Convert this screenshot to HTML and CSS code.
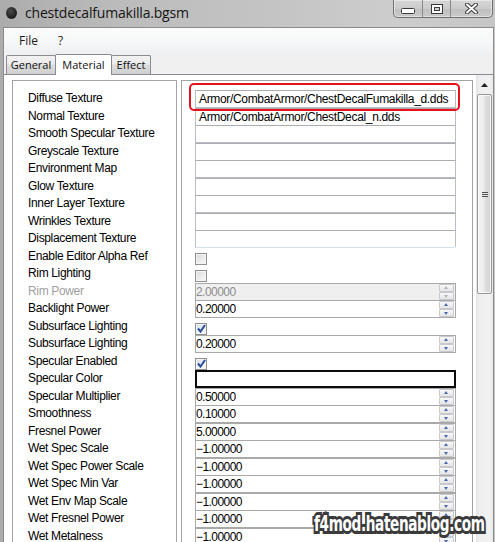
FILE: index.html
```html
<!DOCTYPE html>
<html>
<head>
<meta charset="utf-8">
<title>chestdecalfumakilla.bgsm</title>
<link rel="stylesheet" href="styles.css">
</head>
<body>
<div class="window">
  <div class="titlebar">
    <span class="app-icon"></span>
    <span class="title">chestdecalfumakilla.bgsm</span>
    <div class="caption-buttons">
      <div class="cbtn cbtn-min">
        <svg width="14" height="6" viewBox="0 0 14 6"><rect x="0.5" y="0.5" width="13" height="5" rx="1" fill="#fff" stroke="#3a3a3a"/></svg>
      </div>
      <div class="cbtn cbtn-max">
        <svg width="12" height="10" viewBox="0 0 12 10"><rect x="0.5" y="0.5" width="11" height="9" fill="#fff" stroke="#3a3a3a"/><rect x="3.5" y="3.5" width="5" height="3" fill="#cfcfcf" stroke="#3a3a3a"/></svg>
      </div>
      <div class="cbtn cbtn-close">
        <svg width="13" height="11" viewBox="0 0 13 11"><path d="M2 1.5 L11 9.5 M11 1.5 L2 9.5" stroke="#3a3a3a" stroke-width="4" stroke-linecap="round"/><path d="M2 1.5 L11 9.5 M11 1.5 L2 9.5" stroke="#fff" stroke-width="2" stroke-linecap="round"/></svg>
      </div>
    </div>
  </div>

  <div class="client">
    <div class="menubar">
      <span class="menu-item">File</span>
      <span class="menu-item">?</span>
    </div>

    <div class="tabstrip">
      <div class="tab tab-general">General</div>
      <div class="tab tab-material active">Material</div>
      <div class="tab tab-effect">Effect</div>
    </div>

    <div class="tabpage">
      <div class="panes">
        <div class="labels">
          <div class="lbl">Diffuse Texture</div>
          <div class="lbl">Normal Texture</div>
          <div class="lbl">Smooth Specular Texture</div>
          <div class="lbl">Greyscale Texture</div>
          <div class="lbl">Environment Map</div>
          <div class="lbl">Glow Texture</div>
          <div class="lbl">Inner Layer Texture</div>
          <div class="lbl">Wrinkles Texture</div>
          <div class="lbl">Displacement Texture</div>
          <div class="lbl">Enable Editor Alpha Ref</div>
          <div class="lbl">Rim Lighting</div>
          <div class="lbl dim">Rim Power</div>
          <div class="lbl">Backlight Power</div>
          <div class="lbl">Subsurface Lighting</div>
          <div class="lbl">Subsurface Lighting</div>
          <div class="lbl">Specular Enabled</div>
          <div class="lbl">Specular Color</div>
          <div class="lbl">Specular Multiplier</div>
          <div class="lbl">Smoothness</div>
          <div class="lbl">Fresnel Power</div>
          <div class="lbl">Wet Spec Scale</div>
          <div class="lbl">Wet Spec Power Scale</div>
          <div class="lbl">Wet Spec Min Var</div>
          <div class="lbl">Wet Env Map Scale</div>
          <div class="lbl">Wet Fresnel Power</div>
          <div class="lbl">Wet Metalness</div>
        </div>

        <div class="fields">
          <div class="callout"></div>
          <div class="frow"><div class="tex">Armor/CombatArmor/ChestDecalFumakilla_d.dds</div></div>
          <div class="frow"><div class="tex">Armor/CombatArmor/ChestDecal_n.dds</div></div>
          <div class="frow"><div class="tex"></div></div>
          <div class="frow"><div class="tex"></div></div>
          <div class="frow"><div class="tex"></div></div>
          <div class="frow"><div class="tex"></div></div>
          <div class="frow"><div class="tex"></div></div>
          <div class="frow"><div class="tex"></div></div>
          <div class="frow"><div class="tex tex-last"></div></div>
          <div class="frow"><span class="chk"></span></div>
          <div class="frow"><span class="chk"></span></div>
          <div class="frow"><div class="num off"><span class="val">2.00000</span><span class="spin"><i class="up"></i><i class="dn"></i></span></div></div>
          <div class="frow"><div class="num"><span class="val">0.20000</span><span class="spin"><i class="up"></i><i class="dn"></i></span></div></div>
          <div class="frow"><span class="chk on"><svg width="9" height="9" viewBox="0 0 9 9"><path d="M1 4.5 L3.5 7.5 L8 1" fill="none" stroke="#2c4d9e" stroke-width="2"/></svg></span></div>
          <div class="frow"><div class="num"><span class="val">0.20000</span><span class="spin"><i class="up"></i><i class="dn"></i></span></div></div>
          <div class="frow"><span class="chk on"><svg width="9" height="9" viewBox="0 0 9 9"><path d="M1 4.5 L3.5 7.5 L8 1" fill="none" stroke="#2c4d9e" stroke-width="2"/></svg></span></div>
          <div class="frow"><div class="swatch"></div></div>
          <div class="frow"><div class="num"><span class="val">0.50000</span><span class="spin"><i class="up"></i><i class="dn"></i></span></div></div>
          <div class="frow"><div class="num"><span class="val">0.10000</span><span class="spin"><i class="up"></i><i class="dn"></i></span></div></div>
          <div class="frow"><div class="num"><span class="val">5.00000</span><span class="spin"><i class="up"></i><i class="dn"></i></span></div></div>
          <div class="frow"><div class="num"><span class="val">−1.00000</span><span class="spin"><i class="up"></i><i class="dn"></i></span></div></div>
          <div class="frow"><div class="num"><span class="val">−1.00000</span><span class="spin"><i class="up"></i><i class="dn"></i></span></div></div>
          <div class="frow"><div class="num"><span class="val">−1.00000</span><span class="spin"><i class="up"></i><i class="dn"></i></span></div></div>
          <div class="frow"><div class="num"><span class="val">−1.00000</span><span class="spin"><i class="up"></i><i class="dn"></i></span></div></div>
          <div class="frow"><div class="num"><span class="val">−1.00000</span><span class="spin"><i class="up"></i><i class="dn"></i></span></div></div>
          <div class="frow"><div class="num"><span class="val">−1.00000</span><span class="spin"><i class="up"></i><i class="dn"></i></span></div></div>
        </div>
      </div>

      <div class="vscroll">
        <div class="sb-arrow"><svg width="7" height="4" viewBox="0 0 7 4"><path d="M0 4 L3.5 0 L7 4 Z" fill="#222"/></svg></div>
        <div class="sb-thumb"><span class="grip"></span></div>
      </div>
    </div>
  </div>

  <div class="watermark">f4mod.hatenablog.com</div>
</div>
</body>
</html>
```

FILE: styles.css
```css
* {
  box-sizing: border-box;
}

html,
body {
  margin: 0;
  padding: 0;
}

body {
  width: 495px;
  height: 542px;
  overflow: hidden;
  background: #bdbdbd;
  font-family: "Liberation Sans", Arial, sans-serif;
}

/* ---- window frame ---- */
.window {
  position: relative;
  width: 495px;
  height: 542px;
  display: flex;
  flex-direction: column;
  background: linear-gradient(90deg, #acacac 0%, #bcbcbc 25%, #c4c4c4 55%, #cdcdcd 80%, #c6c6c6 100%);
}

.titlebar {
  height: 27px;
  flex: none;
  display: flex;
  align-items: flex-start;
  padding-left: 6px;
}

.app-icon {
  width: 11px;
  height: 12px;
  margin-top: 7px;
  border-radius: 50%;
  background: radial-gradient(circle at 40% 35%, #4a4a4a, #1c1c1c 70%);
}

.title {
  margin-left: 8px;
  margin-top: 4px;
  font-family: "Open Sans", "Noto Sans", sans-serif;
  font-size: 14px;
  line-height: 18px;
  letter-spacing: -0.2px;
  color: #151515;
}

.caption-buttons {
  margin-left: auto;
  margin-right: 2px;
  display: flex;
  height: 18px;
  border: 1px solid #707070;
  border-top: none;
  border-radius: 0 0 5px 5px;
  overflow: hidden;
  background: linear-gradient(180deg, #d6d6d6 0%, #cbcbcb 50%, #c0c0c0 51%, #c9c9c9 100%);
  box-shadow: inset 0 0 0 1px rgba(255, 255, 255, 0.45);
}

.cbtn {
  display: flex;
  align-items: center;
  justify-content: center;
  height: 17px;
}

.cbtn + .cbtn {
  border-left: 1px solid #8a8a8a;
}

.cbtn-min {
  width: 28px;
  padding-top: 4px;
}

.cbtn-max {
  width: 28px;
}

.cbtn-close {
  width: 42px;
}

/* ---- client area ---- */
.client {
  flex: 1;
  min-height: 0;
  margin: 0 1px 0 3px;
  border: 1px solid #8b8b8b;
  border-bottom: none;
  display: flex;
  flex-direction: column;
  background: #f0f0f0;
}

.menubar {
  height: 25px;
  flex: none;
  display: flex;
  align-items: center;
  padding-left: 5px;
  background: linear-gradient(180deg, #fbfbfb 0%, #f6f7f8 60%, #eff0f1 100%);
  font-family: "Open Sans", "Noto Sans", sans-serif;
  font-size: 12px;
  color: #1c1c1c;
}

.menu-item {
  padding: 0 10px;
}

.tabstrip {
  height: 21px;
  flex: none;
  display: flex;
  align-items: flex-end;
  padding-left: 2px;
  font-family: "Open Sans", "Noto Sans", sans-serif;
  font-size: 11px;
  color: #111;
}

.tab {
  height: 19px;
  line-height: 18px;
  border: 1px solid #898c95;
  border-bottom: none;
  border-radius: 2px 2px 0 0;
  background: linear-gradient(180deg, #f2f2f2 0%, #ebebeb 45%, #dddddd 50%, #cfcfcf 100%);
  text-align: center;
}

.tab-general {
  width: 50px;
}

.tab-material {
  width: 57px;
  margin-left: -1px;
}

.tab-effect {
  width: 40px;
  margin-left: -1px;
}

.tab.active {
  position: relative;
  z-index: 1;
  height: 21px;
  margin-bottom: -1px;
  line-height: 19px;
  background: #fff;
}

.tabpage {
  flex: 1;
  min-height: 0;
  display: flex;
  padding-left: 8px;
  border-top: 1px solid #898c95;
  background: #fff;
}

.panes {
  display: flex;
  gap: 4px;
  padding-top: 5px;
}

/* ---- label column ---- */
.labels {
  width: 165px;
  border: 1px solid #a3a3a3;
  border-bottom: none;
  padding: 9px 0 0 15px;
  font-size: 12px;
  letter-spacing: -0.35px;
  color: #000;
}

.lbl {
  height: 17.5px;
  line-height: 17.5px;
  white-space: nowrap;
}

.lbl.dim {
  color: #a0a0a0;
}

/* ---- value column ---- */
.fields {
  position: relative;
  width: 292px;
  border: 1px solid #a3a3a3;
  border-bottom: none;
  padding: 9px 16px 0 13px;
  font-size: 12px;
  color: #000;
}

.frow {
  display: flow-root;
  height: 17.5px;
  position: relative;
}

.tex {
  height: 18px;
  line-height: 16px;
  padding-left: 3px;
  border: 1px solid #babdc4;
  border-top-color: #abadb3;
  background: #fff;
  letter-spacing: -0.33px;
  white-space: nowrap;
  overflow: hidden;
}

.tex-last {
  border-bottom-color: #d5dfed;
  border-radius: 0 0 2px 0;
}

.num {
  display: flex;
  height: 18px;
  border: 1px solid #a9a9a9;
  background: #fff;
}

.num .val {
  flex: 1;
  line-height: 16px;
  letter-spacing: -0.55px;
}

.num.off {
  background: #efefef;
  color: #8d8d8d;
}

.spin {
  width: 15px;
  margin-right: 1px;
  display: flex;
  flex-direction: column;
}

.spin i {
  position: relative;
  flex: 1;
  border: 1px solid #c7c9cd;
  border-radius: 1px;
  background: linear-gradient(180deg, #f8f8f8, #e6e6e6);
}

.spin i::after {
  content: "";
  position: absolute;
  left: 4px;
  border-left: 2.5px solid transparent;
  border-right: 2.5px solid transparent;
}

.spin .up::after {
  top: 1px;
  border-bottom: 3px solid #4a69b3;
}

.spin .dn::after {
  top: 2px;
  border-top: 3px solid #4a69b3;
}

.num.off .spin .up::after {
  border-bottom-color: #b4b4b4;
}

.num.off .spin .dn::after {
  border-top-color: #b4b4b4;
}

.chk {
  display: flex;
  align-items: center;
  justify-content: center;
  width: 12px;
  height: 12px;
  margin-top: 5px;
  border: 1px solid #8e8f8f;
  background: linear-gradient(135deg, #d9d9d9 0%, #ededed 60%, #f7f7f7 100%);
  box-shadow: inset 0 0 0 1px #f4f4f4;
}

.chk.on {
  background: linear-gradient(135deg, #d3dbe9 0%, #eef1f6 60%, #f7f7f7 100%);
}

.swatch {
  height: 18px;
  border: 2px solid #0b0b0b;
  background: #fff;
}

/* red highlight drawn around the diffuse path */
.callout {
  position: absolute;
  left: 7px;
  top: 2px;
  width: 271px;
  height: 28px;
  border: 2px solid #e8101a;
  border-radius: 5px;
  z-index: 2;
}

/* ---- vertical scrollbar ---- */
.vscroll {
  width: 17px;
  margin-left: 3px;
  display: flex;
  flex-direction: column;
  align-items: center;
  background: linear-gradient(90deg, #e3e3e3 0%, #efefef 20%, #f1f1f1 80%, #e9e9e9 100%);
}

.sb-arrow {
  height: 19px;
  width: 100%;
  display: flex;
  align-items: center;
  justify-content: center;
}

.sb-thumb {
  width: 15px;
  height: 200px;
  display: flex;
  align-items: center;
  justify-content: center;
  border: 1px solid #979797;
  border-radius: 2px;
  background: linear-gradient(90deg, #f4f4f4 0%, #ebebeb 45%, #dedede 55%, #d2d2d2 100%);
  box-shadow: inset 0 0 0 1px rgba(255, 255, 255, 0.7);
}

.grip {
  width: 6px;
  height: 5px;
  background: repeating-linear-gradient(180deg, #4f4f4f 0, #4f4f4f 1px, #e8e8e8 1px, #e8e8e8 2px);
}

/* ---- blog watermark stamped on the capture ---- */
.watermark {
  position: absolute;
  left: 314px;
  top: 510px;
  font-family: "DejaVu Sans", sans-serif;
  font-weight: bold;
  font-size: 22px;
  line-height: 28px;
  letter-spacing: -0.6px;
  color: #fff;
  -webkit-text-stroke: 6px #3b3b3b;
  paint-order: stroke fill;
  transform: scaleX(0.62);
  transform-origin: left center;
  white-space: nowrap;
  z-index: 5;
}
```
